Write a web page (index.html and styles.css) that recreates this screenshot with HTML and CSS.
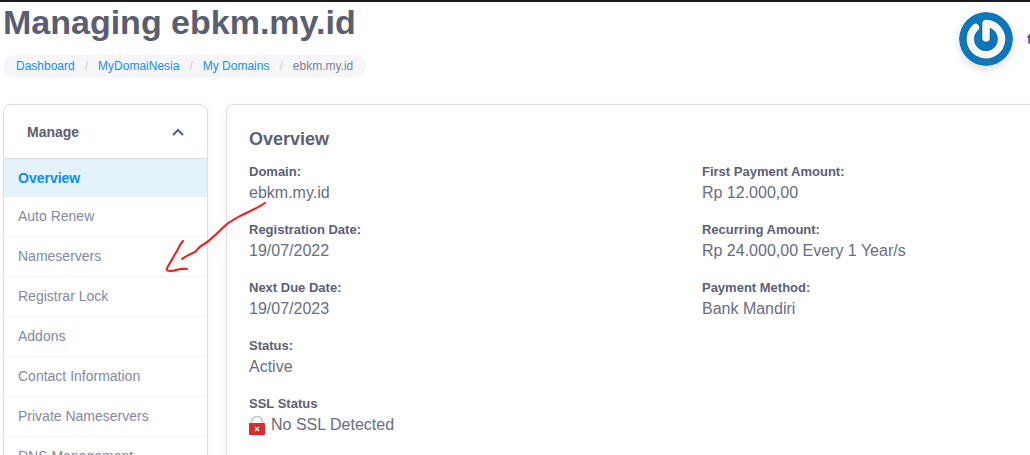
FILE: index.html
```
<!DOCTYPE html>
<html lang="en">
<head>
  <meta charset="UTF-8">
  <title>Managing ebkm.my.id</title>
  <meta name="viewport" content="width=device-width, initial-scale=1">
  <link rel="stylesheet" href="styles.css">
</head>
<body>
  <div class="page">
    <!-- Page header -->
    <header class="header">
      <div class="header-title">
        <h1>Managing ebkm.my.id</h1>
        <nav aria-label="Breadcrumb">
          <ol class="breadcrumb">
            <li><a href="#">Dashboard</a></li>
            <li><a href="#">MyDomaiNesia</a></li>
            <li><a href="#">My Domains</a></li>
            <li class="active">ebkm.my.id</li>
          </ol>
        </nav>
      </div>
      <div class="user">
        <svg class="avatar" viewBox="0 0 54 54" role="img" aria-label="Avatar">
          <circle cx="27" cy="27" r="27" fill="#0d76bd"/>
          <path d="M16.500 15.500A15.600 15.600 0 1 0 27 11.500V26" fill="none" stroke="#0a5f9c" stroke-width="9.500" stroke-linecap="round" stroke-linejoin="round" opacity=".6"/>
          <path d="M16.500 15.500A15.600 15.600 0 1 0 27 11.500V26" fill="none" stroke="#f7f7f3" stroke-width="7.500" stroke-linecap="round" stroke-linejoin="round"/>
        </svg>
        <span class="user-name">t</span>
      </div>
    </header>

    <div class="content">
      <!-- Sidebar -->
      <aside class="card sidebar">
        <button class="sidebar-toggle" type="button" aria-expanded="true">
          Manage
          <svg class="chevron" viewBox="0 0 12 8" aria-hidden="true">
            <path d="M1 7L6 2L11 7" fill="none" stroke="currentColor" stroke-width="2"/>
          </svg>
        </button>
        <nav class="menu">
          <a class="active" href="#">Overview</a>
          <a href="#">Auto Renew</a>
          <a href="#">Nameservers</a>
          <a href="#">Registrar Lock</a>
          <a href="#">Addons</a>
          <a href="#">Contact Information</a>
          <a href="#">Private Nameservers</a>
          <a href="#">DNS Management</a>
        </nav>
      </aside>

      <!-- Domain overview -->
      <main class="card overview">
        <h2>Overview</h2>
        <div class="details">
          <dl>
            <dt>Domain:</dt>
            <dd>ebkm.my.id</dd>
            <dt>Registration Date:</dt>
            <dd>19/07/2022</dd>
            <dt>Next Due Date:</dt>
            <dd>19/07/2023</dd>
            <dt>Status:</dt>
            <dd>Active</dd>
            <dt>SSL Status</dt>
            <dd class="ssl">
              <svg class="lock" viewBox="0 0 16 20" aria-hidden="true">
                <path d="M2.500 9V7a5.500 5.500 0 0 1 11 0v2" fill="none" stroke="#c3c3c3" stroke-width="1.500"/>
                <rect y="8" width="16" height="12" rx="1" fill="#dc2a34"/>
                <path d="M6 12l4 4M10 12l-4 4" stroke="#fff" stroke-width="1.300"/>
              </svg>
              No SSL Detected
            </dd>
          </dl>
          <dl>
            <dt>First Payment Amount:</dt>
            <dd>Rp 12.000,00</dd>
            <dt>Recurring Amount:</dt>
            <dd>Rp 24.000,00 Every 1 Year/s</dd>
            <dt>Payment Method:</dt>
            <dd>Bank Mandiri</dd>
          </dl>
        </div>
      </main>
    </div>

    <!-- Hand drawn arrow over the page -->
    <svg class="arrow" viewBox="0 0 102 72" aria-hidden="true">
      <path d="M100 1C92 6 84 10 75 14C70 17 66 19 62 22C57 26 53 31 48 35C44 39 40 42 36 44C34 45 32 48 30 50C26 52 21 54 17 57M18 39C16 41 14 44 13 47L2 66C1 69 3 69 6 69C12 68 16 66 22 67"/>
    </svg>
  </div>
</body>
</html>
```
FILE: styles.css
```
* {
  box-sizing: border-box;
}
body {
  margin: 0;
  font-family: "Liberation Sans", Arial, sans-serif;
  font-size: 14px;
  color: #5c6073;
  background: #fff;
}
.page {
  position: relative;
  height: 100vh;
  overflow: hidden;
  padding-left: 3px;
  border-top: 2px solid #1b191b;
}
a {
  text-decoration: none;
}

/* Header */
.header {
  display: flex;
  justify-content: space-between;
  padding-bottom: 27px;
}
h1 {
  margin: 0 0 13px;
  font-size: 34px;
  line-height: 40px;
  color: #5a5e70;
}
.breadcrumb {
  display: inline-flex;
  margin: 0;
  padding: 0 13px;
  list-style: none;
  font-size: 12px;
  line-height: 22px;
  background: #f6f6f9;
  border-radius: 11px;
}
.breadcrumb a {
  color: #1d8ceb;
}
.breadcrumb .active {
  color: #7d8090;
}
.breadcrumb li + li::before {
  content: "/";
  padding: 0 10px;
  color: #c6c8d0;
}
.user {
  display: flex;
  align-items: center;
  align-self: flex-start;
  gap: 14px;
  width: 71px;
  margin-top: 10px;
}
.avatar {
  flex: none;
  width: 54px;
  height: 54px;
  border-radius: 50%;
  box-shadow: 0 3px 8px rgba(0, 0, 0, 0.15);
}
.user-name {
  font-weight: bold;
}

/* Cards */
.content {
  display: flex;
  gap: 18px;
}
.card {
  background: #fff;
  border: 1px solid #dddee4;
  border-radius: 8px;
  box-shadow: 0 0 12px rgba(0, 0, 0, 0.03);
}

/* Sidebar */
.sidebar {
  flex: none;
  width: 205px;
  overflow: hidden;
}
.sidebar-toggle {
  display: flex;
  align-items: center;
  justify-content: space-between;
  width: 100%;
  height: 54px;
  padding: 0 23px;
  font: bold 14px "Liberation Sans", Arial, sans-serif;
  color: #5c6073;
  background: none;
  border: 0;
  border-bottom: 1px solid #dddee4;
}
.chevron {
  width: 12px;
  height: 8px;
}
.menu a {
  display: block;
  padding: 0 14px;
  line-height: 39px;
  color: #85899c;
  border-bottom: 1px solid #f3f3f6;
}
.menu .active {
  font-weight: bold;
  line-height: 38px;
  color: #0d8eed;
  background: #e4f2fc;
  border-bottom: 0;
}

/* Overview */
.overview {
  flex: 1;
  padding: 22px 0 0 22px;
  border-right: 0;
  border-radius: 8px 0 0 8px;
}
h2 {
  margin: 0 0 11px;
  font-size: 18px;
  line-height: 24px;
}
.details {
  display: grid;
  grid-template-columns: 58fr 42fr;
}
dl {
  margin: 0;
}
dt {
  font-size: 13px;
  font-weight: bold;
  line-height: 20px;
}
dd {
  margin: 0 0 16px;
  font-size: 16px;
  line-height: 22px;
  color: #696d7f;
}
.ssl {
  display: flex;
  align-items: center;
  gap: 6px;
}
.lock {
  width: 16px;
  height: 20px;
}

.arrow {
  position: absolute;
  left: 165px;
  top: 200px;
  width: 102px;
  height: 72px;
  fill: none;
  stroke: #fb1519;
  stroke-width: 2;
  stroke-linecap: round;
  stroke-linejoin: round;
}
```
